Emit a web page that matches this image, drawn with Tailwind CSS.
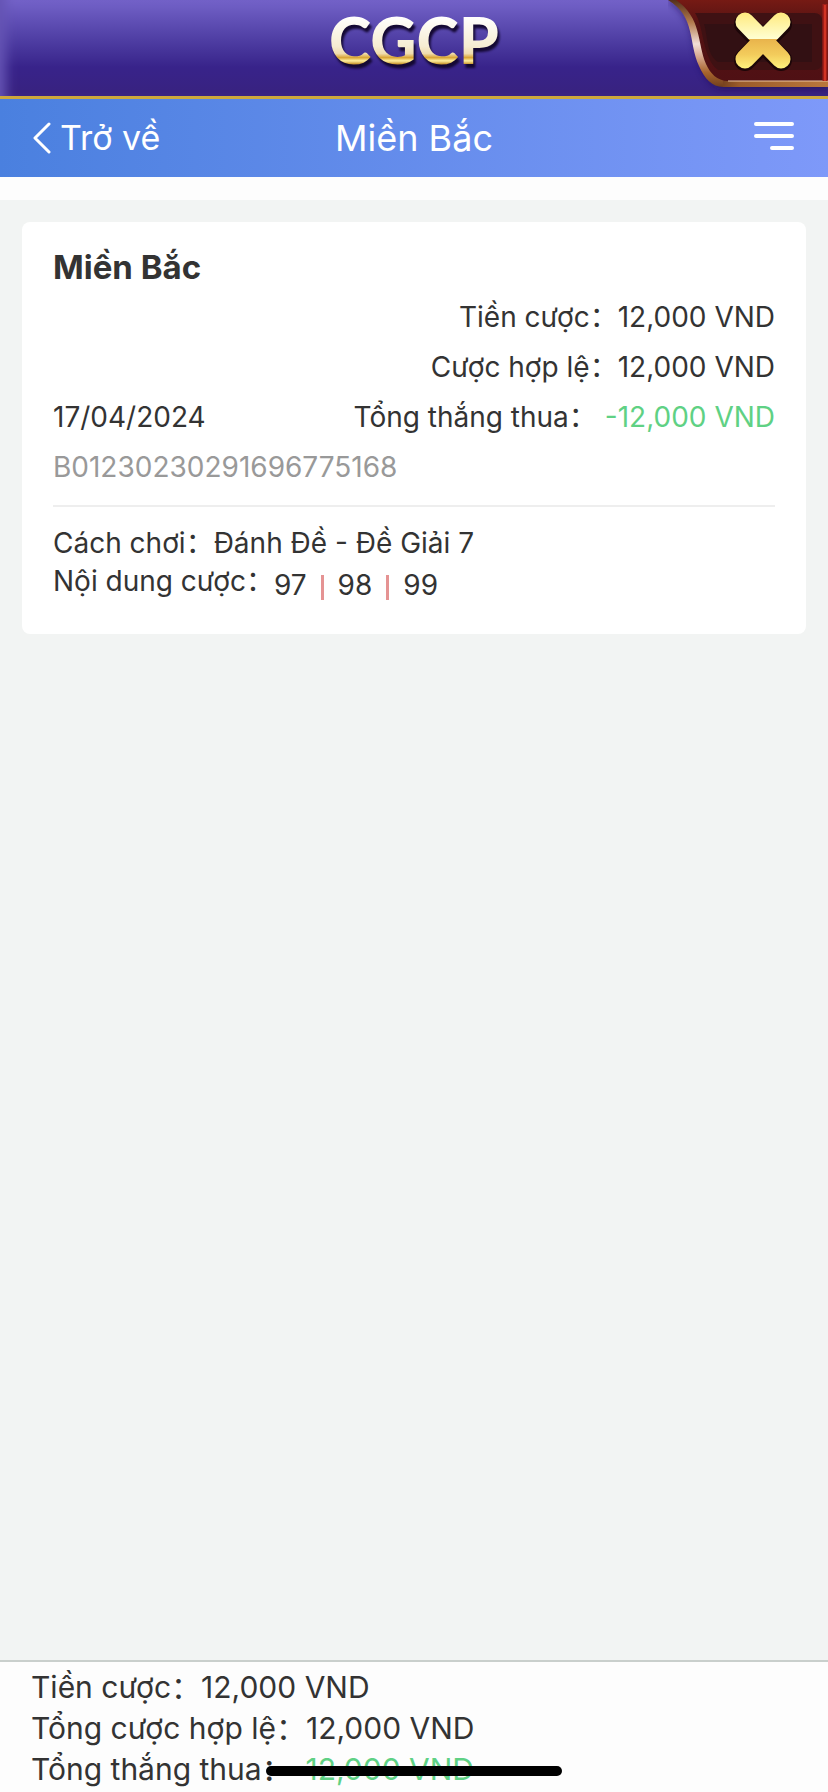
<!DOCTYPE html>
<html lang="vi">
<head>
    <meta charset="utf-8">
    <title>CGCP - Miền Bắc</title>
    <meta name="viewport" content="width=device-width, initial-scale=1.0">
    <script src="https://cdn.jsdelivr.net/npm/@tailwindcss/browser@4"></script>
</head>
<body class="h-screen flex flex-col bg-[#f2f4f3] text-[#333] font-[Inter,'Noto_Sans_CJK_SC',sans-serif]">

    <!-- Game banner -->
    <header class="relative shrink-0 h-[99px] flex items-start justify-center border-b-3 border-[#cda83c] bg-linear-to-b from-[#7463c9] via-[#38238a] via-70% to-[#38227f] shadow-[inset_14px_0_12px_-8px_#6554b4]">
        <h1 class="font-[Lato,sans-serif] font-black text-[64px] leading-[80px] bg-[linear-gradient(#fff_20%,#f6ecd2_58%,#efdcae_67%,#d9a535_72%,#fff0a0_76%,#c9962e_80%)] bg-clip-text text-transparent drop-shadow-[2px_4px_1px_#140833]">CGCP</h1>
        <button class="absolute top-0 right-0" aria-label="Close">
            <svg width="160" height="96" viewBox="0 0 160 96" fill="none">
                <defs>
                    <linearGradient id="rim" x1="0" y1="0" x2="0" y2="88" gradientUnits="userSpaceOnUse">
                        <stop offset="0" stop-color="#54301c"/>
                        <stop offset=".25" stop-color="#b27a4c"/>
                        <stop offset=".5" stop-color="#f2dfd8"/>
                        <stop offset=".65" stop-color="#d5a78c"/>
                        <stop offset=".82" stop-color="#a8652e"/>
                        <stop offset="1" stop-color="#6d3c1b"/>
                    </linearGradient>
                    <linearGradient id="red" x1="0" y1="0" x2="0" y2="82" gradientUnits="userSpaceOnUse">
                        <stop offset="0" stop-color="#761a14"/>
                        <stop offset=".3" stop-color="#541313"/>
                        <stop offset="1" stop-color="#4f1014"/>
                    </linearGradient>
                    <linearGradient id="gold" x1="0" y1="12" x2="0" y2="69" gradientUnits="userSpaceOnUse">
                        <stop offset="0" stop-color="#ffe97c"/>
                        <stop offset=".47" stop-color="#ffffd2"/>
                        <stop offset=".48" stop-color="#e9b44c"/>
                        <stop offset=".75" stop-color="#f3cc5c"/>
                        <stop offset="1" stop-color="#fff47e"/>
                    </linearGradient>
                    <linearGradient id="bar" x1="50" y1="0" x2="160" y2="0" gradientUnits="userSpaceOnUse">
                        <stop offset="0" stop-color="#6d3c1b"/>
                        <stop offset=".2" stop-color="#9c5c2a"/>
                        <stop offset="1" stop-color="#b9783c"/>
                    </linearGradient>
                    <filter id="soft" x="-20%" y="-20%" width="140%" height="140%">
                        <feGaussianBlur stdDeviation="3"/>
                    </filter>
                </defs>
                <path d="M0 2C28 20 22 44 33 69C38 80 45 90 56 90H160V0H0Z" fill="#1d0d4f" opacity=".5" filter="url(#soft)"/>
                <path d="M0 0C28 17 20 42 31 66C36 78 44 87 55 87H160V0Z" fill="url(#rim)"/>
                <path d="M55 81H160V87H55Z" fill="url(#bar)"/>
                <path d="M8 0C34 18 29 43 38 64C42 73 49 81 60 81H160V0Z" fill="url(#red)"/>
                <path d="M27 13H146Q154 13 154 21V62Q154 70 146 70H50C34 58 36 26 27 13Z" fill="#3f1113"/>
                <path d="M36 24H144V62H50C38 54 40 36 36 24Z" fill="#321013"/>
                <path d="M60 81H160" stroke="#ecc6a2" stroke-width="1"/>
                <path d="M157 4V81" stroke="#a01e18" stroke-width="5"/>
                <path d="M157 5V81" stroke="#d13424" stroke-width="2"/>
                <path d="M77 24L113 60M113 24L77 60" stroke="#1c0608" stroke-width="22" stroke-linecap="round"/>
                <path d="M77 22L113 59M113 22L77 59" stroke="url(#gold)" stroke-width="19" stroke-linecap="round"/>
            </svg>
        </button>
    </header>

    <!-- Navigation bar -->
    <nav class="shrink-0 h-[78px] px-8 grid grid-cols-3 items-center text-white text-[36px] leading-[44px] bg-linear-to-r from-[#4a80df] to-[#7e99f9]">
        <a href="#" class="flex items-center gap-2 text-[34px]">
            <svg width="20" height="32" viewBox="0 0 20 32" fill="none" stroke="currentColor" stroke-width="3" stroke-linecap="round" stroke-linejoin="round">
                <path d="M17 2L3 16L17 30"/>
            </svg>
            <span>Trở về</span>
        </a>
        <h2 class="text-center whitespace-nowrap">Miền Bắc</h2>
        <button class="justify-self-end" aria-label="Menu">
            <svg width="42" height="32" viewBox="0 0 42 32" fill="none" stroke="currentColor" stroke-width="4" stroke-linecap="round">
                <path d="M2 2H38M2 14H38M18 26H38"/>
            </svg>
        </button>
    </nav>
    <div class="shrink-0 h-[23px] bg-[#fdfdfd]"></div>

    <!-- Bet detail -->
    <main class="flex-1 overflow-hidden p-[22px]">
        <section class="bg-white rounded-lg px-[31px] pt-5 pb-[30px] text-[28px] leading-[50px]">
            <h3 class="text-[33px] font-bold">Miền Bắc</h3>
            <p class="text-right">Tiền cược：<span>12,000 VND</span></p>
            <p class="text-right">Cược hợp lệ：<span>12,000 VND</span></p>
            <div class="flex justify-between">
                <span>17/04/2024</span>
                <p>Tổng thắng thua：<span class="ml-2 text-[#5fd184]">-12,000 VND</span></p>
            </div>
            <p class="text-[#999]">B01230230291696775168</p>
            <div class="mt-[13px] pt-[17px] border-t-2 border-[#eee] leading-[38px]">
                <p>Cách chơi：<span>Đánh Đề - Đề Giải 7</span></p>
                <div class="flex">
                    <span>Nội dung cược：</span>
                    <ul class="flex pt-1">
                        <li>97</li>
                        <li class="flex items-center"><i class="w-[3px] h-[25px] mx-[14px] mt-1 bg-[#e59393]"></i>98</li>
                        <li class="flex items-center"><i class="w-[3px] h-[25px] mx-[14px] mt-1 bg-[#e59393]"></i>99</li>
                    </ul>
                </div>
            </div>
        </section>
    </main>

    <!-- Totals -->
    <footer class="relative shrink-0 px-[31px] pt-[5px] pb-[2px] border-t-2 border-[#c9cfcc] bg-[#fdfdfd] text-[30px] leading-[41px]">
        <p>Tiền cược：<span>12,000 VND</span></p>
        <p>Tổng cược hợp lệ：<span>12,000 VND</span></p>
        <p>Tổng thắng thua：<span class="text-[#5fd184]">-12,000 VND</span></p>
        <div class="absolute bottom-4 left-1/2 -translate-x-1/2 w-[296px] h-[10px] rounded-full bg-black"></div>
    </footer>
</body>
</html>
